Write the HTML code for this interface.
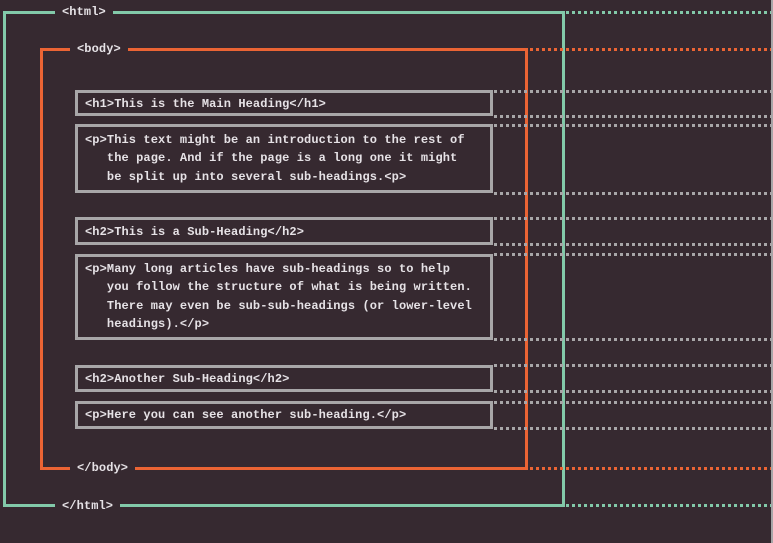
<!DOCTYPE html>
<html><head><meta charset="utf-8"><style>
html,body{margin:0;padding:0}
body{width:773px;height:543px;background:#362930;position:relative;overflow:hidden;font-family:"Liberation Mono",monospace;font-size:12px;font-weight:bold;color:#e6e2e6;letter-spacing:0.1px}
.a{position:absolute}
.g{background:#82c9a9}.o{background:#eb6434}.y{background:#a8a6a8}
.dg{background:repeating-linear-gradient(90deg,#82c9a9 0 3px,transparent 3px 6px)}
.do{background:repeating-linear-gradient(90deg,#eb6434 0 3px,transparent 3px 6px)}
.dy{background:repeating-linear-gradient(90deg,#a8a6a8 0 3px,transparent 3px 6px)}
.box{position:absolute;left:75px;width:412px;border:3px solid #a8a6a8}
.t{position:absolute;left:85px;line-height:18.4px;white-space:pre}
.lab{position:absolute;background:#362930;padding:0 7px;line-height:14px}
</style></head><body>
<div class="a g" style="left:3px;top:11px;width:3px;height:496px"></div>
<div class="a g" style="left:3px;top:11px;width:562px;height:3px"></div>
<div class="a g" style="left:3px;top:504px;width:562px;height:3px"></div>
<div class="a g" style="left:562px;top:11px;width:3px;height:496px"></div>
<div class="a dg" style="left:566px;top:11px;width:207px;height:3px"></div>
<div class="a dg" style="left:566px;top:504px;width:207px;height:3px"></div>
<div class="a o" style="left:40px;top:48px;width:3px;height:422px"></div>
<div class="a o" style="left:40px;top:48px;width:488px;height:3px"></div>
<div class="a o" style="left:40px;top:467px;width:488px;height:3px"></div>
<div class="a o" style="left:525px;top:48px;width:3px;height:422px"></div>
<div class="a do" style="left:530px;top:48px;width:243px;height:3px"></div>
<div class="a do" style="left:530px;top:467px;width:243px;height:3px"></div>
<div class="box" style="top:90px;height:20px"></div>
<div class="box" style="top:124px;height:63px"></div>
<div class="box" style="top:217px;height:22px"></div>
<div class="box" style="top:254px;height:80px"></div>
<div class="box" style="top:365px;height:21px"></div>
<div class="box" style="top:401px;height:22px"></div>
<div class="a dy" style="left:494px;top:90px;width:279px;height:3px"></div>
<div class="a dy" style="left:494px;top:115px;width:279px;height:3px"></div>
<div class="a dy" style="left:494px;top:124px;width:279px;height:3px"></div>
<div class="a dy" style="left:494px;top:192px;width:279px;height:3px"></div>
<div class="a dy" style="left:494px;top:217px;width:279px;height:3px"></div>
<div class="a dy" style="left:494px;top:243px;width:279px;height:3px"></div>
<div class="a dy" style="left:494px;top:253px;width:279px;height:3px"></div>
<div class="a dy" style="left:494px;top:338px;width:279px;height:3px"></div>
<div class="a dy" style="left:494px;top:364px;width:279px;height:3px"></div>
<div class="a dy" style="left:494px;top:390px;width:279px;height:3px"></div>
<div class="a dy" style="left:494px;top:401px;width:279px;height:3px"></div>
<div class="a dy" style="left:494px;top:427px;width:279px;height:3px"></div>
<div class="a y" style="left:771px;top:0;width:2px;height:543px"></div>
<div class="lab" style="left:55px;top:5px">&lt;html&gt;</div>
<div class="lab" style="left:70px;top:42px">&lt;body&gt;</div>
<div class="lab" style="left:70px;top:461px">&lt;/body&gt;</div>
<div class="lab" style="left:55px;top:499px">&lt;/html&gt;</div>
<div class="t" style="top:95px">&lt;h1&gt;This is the Main Heading&lt;/h1&gt;</div>
<div class="t" style="top:131px">&lt;p&gt;This text might be an introduction to the rest of
   the page. And if the page is a long one it might
   be split up into several sub-headings.&lt;p&gt;</div>
<div class="t" style="top:223px">&lt;h2&gt;This is a Sub-Heading&lt;/h2&gt;</div>
<div class="t" style="top:260px">&lt;p&gt;Many long articles have sub-headings so to help
   you follow the structure of what is being written.
   There may even be sub-sub-headings (or lower-level
   headings).&lt;/p&gt;</div>
<div class="t" style="top:370px">&lt;h2&gt;Another Sub-Heading&lt;/h2&gt;</div>
<div class="t" style="top:406px">&lt;p&gt;Here you can see another sub-heading.&lt;/p&gt;</div>
</body></html>
